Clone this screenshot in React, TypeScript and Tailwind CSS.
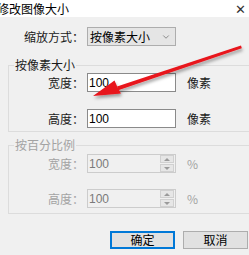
import { ChevronDown } from 'lucide-react';

const font = { fontFamily: '"Noto Sans CJK SC", "Noto Sans", sans-serif' };

function Spinner() {
  return (
    <div className="flex flex-col gap-[1px] mr-[1px]">
      <div className="w-[14px] h-[8px] bg-[#e6e6e6] border border-[#d0d0d0] flex items-center justify-center">
        <div className="w-0 h-0 border-l-[3px] border-r-[3px] border-b-[3px] border-l-transparent border-r-transparent border-b-[#9a9a9a]" />
      </div>
      <div className="w-[14px] h-[8px] bg-[#e6e6e6] border border-[#d0d0d0] flex items-center justify-center">
        <div className="w-0 h-0 border-l-[3px] border-r-[3px] border-t-[3px] border-l-transparent border-r-transparent border-t-[#9a9a9a]" />
      </div>
    </div>
  );
}

function Row({ label, unit, disabled }: { label: string; unit: string; disabled?: boolean }) {
  return (
    <div className="flex items-center h-[19px]">
      <div className={`w-[84px] shrink-0 text-right ${disabled ? 'text-[#a3a3a3]' : 'text-[#1a1a1a]'}`}>
        {label}
      </div>
      <div
        className={`ml-[3px] w-[89px] h-[19px] shrink-0 flex items-center justify-between border ${
          disabled ? 'bg-[#f0f0f0] border-[#cccccc] text-[#7a7a7a]' : 'bg-white border-[#8a8a8a] text-black'
        }`}
      >
        <span className="pl-[1px] text-[12px] leading-[14px]" style={{ fontFamily: '"Liberation Sans", sans-serif' }}>100</span>
        {disabled && <Spinner />}
      </div>
      <div className={`ml-[11px] ${disabled ? 'text-[#a3a3a3]' : 'text-[#1a1a1a]'}`}>{unit}</div>
    </div>
  );
}

function Group({ title, disabled, className, children }: { title: string; disabled?: boolean; className: string; children: React.ReactNode }) {
  return (
    <div className={`ml-[8px] border-l border-t border-b border-[#dcdcdc] ${className}`}>
      <span className={`block w-fit -mt-[9px] ml-[5px] px-[1px] bg-[#f0f0f0] leading-[16px] ${disabled ? 'text-[#a3a3a3]' : 'text-[#1a1a1a]'}`}>
        {title}
      </span>
      <div className="ml-[-9px]">{children}</div>
    </div>
  );
}

export default function App() {
  return (
    <div className="relative w-[249px] h-[255px] overflow-hidden bg-[#f0f0f0] text-[12px] leading-[16px]" style={font}>
      {/* Title bar */}
      <div className="h-[17px] bg-white flex items-center justify-between">
        <span className="ml-[-3px] text-[12px] text-black leading-[14px]">修改图像大小</span>
        <span className="mr-[3px] text-[13px] text-[#333] leading-[14px]">✕</span>
      </div>

      {/* Scale mode */}
      <div className="mt-[10px] flex items-center h-[19px]">
        <div className="w-[84px] text-right text-[#1a1a1a]">缩放方式：</div>
        <div className="ml-[3px] w-[89px] h-[19px] bg-[#e5e5e5] border border-[#adadad] flex items-center justify-between pl-[2px] pr-[4px]">
          <span className="text-black">按像素大小</span>
          <ChevronDown className="w-[10px] h-[10px] text-[#555]" strokeWidth={1.5} />
        </div>
      </div>

      {/* By pixel */}
      <Group title="按像素大小" className="mt-[19px] pb-[3px]">
        <div className="flex flex-col gap-[17px]">
          <Row label="宽度：" unit="像素" />
          <Row label="高度：" unit="像素" />
        </div>
      </Group>

      {/* By percent */}
      <Group title="按百分比例" disabled className="mt-[13px] pb-[5px]">
        <div className="flex flex-col gap-[16px] pt-[1px]">
          <Row label="宽度：" unit="%" disabled />
          <Row label="高度：" unit="%" disabled />
        </div>
      </Group>

      {/* Buttons */}
      <div className="mt-[17px] flex">
        <button className="ml-[110px] w-[65px] h-[18px] shrink-0 bg-[#e1e1e1] border border-[#0078d7] outline outline-1 outline-[#0078d7] -outline-offset-2 text-black leading-[14px]">
          确定
        </button>
        <button className="ml-[8px] w-[65px] h-[18px] shrink-0 bg-[#e1e1e1] border border-[#adadad] text-black leading-[14px]">
          取消
        </button>
      </div>

      {/* Red annotation arrow */}
      <svg className="absolute inset-0 pointer-events-none" width="249" height="255" viewBox="0 0 249 255">
        <defs>
          <filter id="sh" x="-20%" y="-20%" width="140%" height="140%">
            <feDropShadow dx="1" dy="2.5" stdDeviation="1.5" floodColor="#000" floodOpacity="0.35" />
          </filter>
        </defs>
        <g filter="url(#sh)">
          <path d="M241 45.5 L117 86.5 L118.2 90.2 L241.8 48.2 Z" fill="#e8141b" />
          <path d="M93 96 L114.5 80.5 L117.6 87.6 L121 93.5 Z" fill="#e8141b" />
        </g>
      </svg>
    </div>
  );
}
